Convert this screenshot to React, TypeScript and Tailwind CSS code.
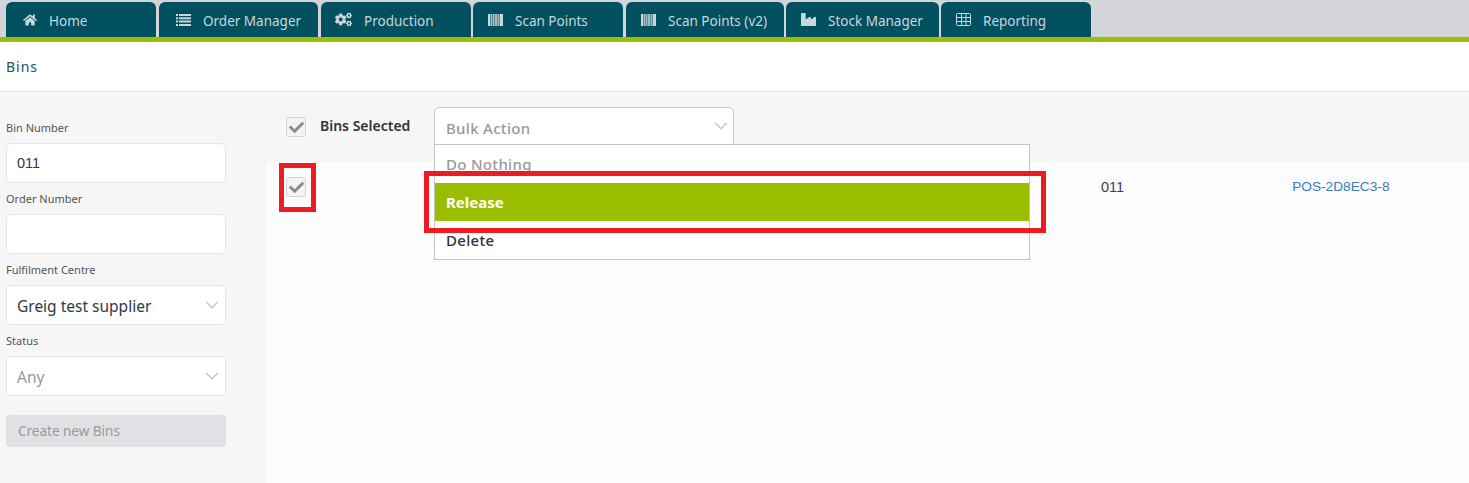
import { FaCheck, FaCogs, FaHome, FaIndustry } from "react-icons/fa";
import { LuChevronDown } from "react-icons/lu";

const BarcodeIcon: React.FC<{ size?: number; className?: string }> = ({ className }) => (
  <svg className={className} width="15" height="12" viewBox="0 0 15 12" fill="currentColor">
    <rect x="0" width="2" height="12" />
    <rect x="2" width="1" height="12" opacity="0.45" />
    <rect x="3" width="1" height="12" opacity="0.8" />
    <rect x="4" width="1" height="12" opacity="0.45" />
    <rect x="5" width="1" height="12" opacity="0.8" />
    <rect x="6" width="1" height="12" opacity="0.45" />
    <rect x="7" width="2" height="12" opacity="0.8" />
    <rect x="9" width="1" height="12" opacity="0.45" />
    <rect x="10" width="1" height="12" opacity="0.8" />
    <rect x="11" width="1" height="12" opacity="0.45" />
    <rect x="12" width="3" height="12" />
  </svg>
);

const ListIcon: React.FC<{ size?: number; className?: string }> = ({ className }) => (
  <svg className={className} width="15" height="12" viewBox="0 0 15 12" fill="currentColor">
    <path d="M0 0h2v2H0zM3 0h12v2H3zM0 3.3h2v2H0zM3 3.3h12v2H3zM0 6.6h2v2H0zM3 6.6h12v2H3zM0 10h2v2H0zM3 10h12v2H3z" />
  </svg>
);

const GridIcon: React.FC<{ size?: number; className?: string }> = ({ className }) => (
  <svg className={className} width="15" height="13" viewBox="0 0 15 13" fill="none" stroke="currentColor">
    <rect x="0.5" y="0.5" width="14" height="12" rx="1" />
    <path d="M0 4.5h15M0 8.5h15M5.5 0v13M10 0v13" />
  </svg>
);

const tabs = [
  { label: "Home", icon: FaHome, size: 14, box: "w-[150px] pl-[17px] gap-[12px]" },
  { label: "Order Manager", icon: ListIcon, size: 15, box: "ml-[3px] w-[159px] pl-[17px] gap-[12px]" },
  { label: "Production", icon: FaCogs, size: 17, box: "ml-[3px] w-[150px] pl-[14px] gap-[12px]" },
  { label: "Scan Points", icon: BarcodeIcon, size: 15, box: "ml-[2px] w-[150px] pl-[15px] gap-[12px]" },
  { label: "Scan Points (v2)", icon: BarcodeIcon, size: 15, box: "ml-[3px] w-[158px] pl-[15px] gap-[12px]" },
  { label: "Stock Manager", icon: FaIndustry, size: 15, box: "ml-[2px] w-[153px] pl-[15px] gap-[12px]" },
  { label: "Reporting", icon: GridIcon, size: 15, box: "ml-[2px] w-[150px] pl-[15px] gap-[12px]" },
];

const Label: React.FC<{ text: string }> = ({ text }) => (
  <div className="h-[31px] text-[11px] leading-[31px] text-[#555]">{text}</div>
);

const Field: React.FC<{ value?: string; muted?: boolean; select?: boolean; mono?: boolean }> = ({ value, muted, select, mono }) => (
  <div className="flex h-[40px] w-[220px] items-center justify-between rounded-[5px] border border-[#e5e5e5] bg-white pl-[10px] pr-[2px]">
    <span
      className={`${mono ? "pt-[1px] font-['Liberation_Sans',sans-serif] text-[14.5px]" : "pt-[3px] text-[15.5px]"} ${muted ? "text-[#999]" : "text-[#2f3a45]"}`}
    >
      {value}
    </span>
    {select && <LuChevronDown className="text-[#c4c4c4]" size={22} strokeWidth={1.5} />}
  </div>
);

const CheckBox: React.FC = () => (
  <div className="flex h-[20px] w-[20px] items-center justify-center rounded-[2px] border border-[#d5d5d5] bg-[#f4f4f4]">
    <FaCheck className="text-[#8a8a8a]" size={15} />
  </div>
);

export default function App() {
  return (
    <div className="relative h-[483px] w-[1469px] overflow-hidden bg-white font-['Noto_Sans',sans-serif]">
      {/* tab bar */}
      <div className="flex h-[42px] border-b-[5px] border-[#9bbd04] bg-[#d4d5da] pl-[6px] pt-[2px]">
        {tabs.map((tab) => {
          const Icon = tab.icon;
          return (
            <div
              key={tab.label}
              className={`flex h-[35px] items-center rounded-t-[6px] bg-[#01505f] text-[13.5px] text-[#c9d6da] ${tab.box}`}
            >
              <Icon size={tab.size} className="shrink-0" />
              <span className="whitespace-nowrap pt-[3px]">{tab.label}</span>
            </div>
          );
        })}
      </div>

      <div className="flex h-[50px] items-center border-b border-[#e3e3e3] pl-[6px] text-[14px] tracking-[1px] text-[#20506a]">
        Bins
      </div>

      <div className="flex h-[391px]">
        {/* filters */}
        <div className="w-[266px] shrink-0 bg-[#f6f6f6] pl-[6px] pt-[20px]">
          <Label text="Bin Number" />
          <Field value="011" mono />
          <Label text="Order Number" />
          <Field />
          <Label text="Fulfilment Centre" />
          <Field value="Greig test supplier" select />
          <Label text="Status" />
          <Field value="Any" muted select />
          <div className="mt-[19px] flex h-[32px] w-[220px] items-center rounded-[4px] bg-[#e0e1e5] pl-[12px] text-[13.5px] text-[#999]">
            Create new Bins
          </div>
        </div>

        {/* bins table */}
        <div className="flex-1 bg-[#fcfcfc]">
          <div className="flex h-[70px] items-start bg-[#f6f6f6] pl-[20px] pt-[25px]">
            <CheckBox />
            <span className="ml-[14px] text-[14px] font-semibold leading-[18px] text-[#333]">Bins Selected</span>
          </div>
          <div className="flex items-start pl-[20px] pt-[15px] font-['Liberation_Sans',sans-serif] leading-[20px]">
            <CheckBox />
            <span className="ml-[795px] text-[14.5px] text-[#33415c]">011</span>
            <span className="ml-[168px] text-[13.7px] text-[#3a7cbd]">POS-2D8EC3-8</span>
          </div>
        </div>
      </div>

      {/* bulk action dropdown */}
      <div className="absolute left-[434px] top-[107px] flex h-[38px] w-[300px] items-center justify-between rounded-t-[5px] border border-[#c9c9c9] bg-white pl-[11px] pr-[1px] text-[15px] font-medium tracking-[0.3px] text-[#999]">
        <span className="pt-[5px]">Bulk Action</span>
        <LuChevronDown className="text-[#c4c4c4]" size={22} strokeWidth={1.5} />
      </div>
      <div className="absolute left-[434px] top-[144px] h-[116px] w-[596px] border border-[#c4c4c4] bg-white text-[15px] font-medium">
        <div className="flex h-[38px] items-center pl-[11px] tracking-[0.3px] text-[#999]">Do Nothing</div>
        <div className="flex h-[38px] items-center bg-[#9bbd00] pl-[11px] font-bold text-white">Release</div>
        <div className="flex h-[38px] items-center pl-[11px] tracking-[0.3px] text-[#333]">Delete</div>
      </div>

      {/* annotations */}
      <div className="absolute left-[279px] top-[163px] h-[49px] w-[37px] border-[5px] border-[#ed1c24]" />
      <div className="absolute left-[424px] top-[171px] h-[62px] w-[622px] border-[5px] border-[#ed1c24]" />
    </div>
  );
}
